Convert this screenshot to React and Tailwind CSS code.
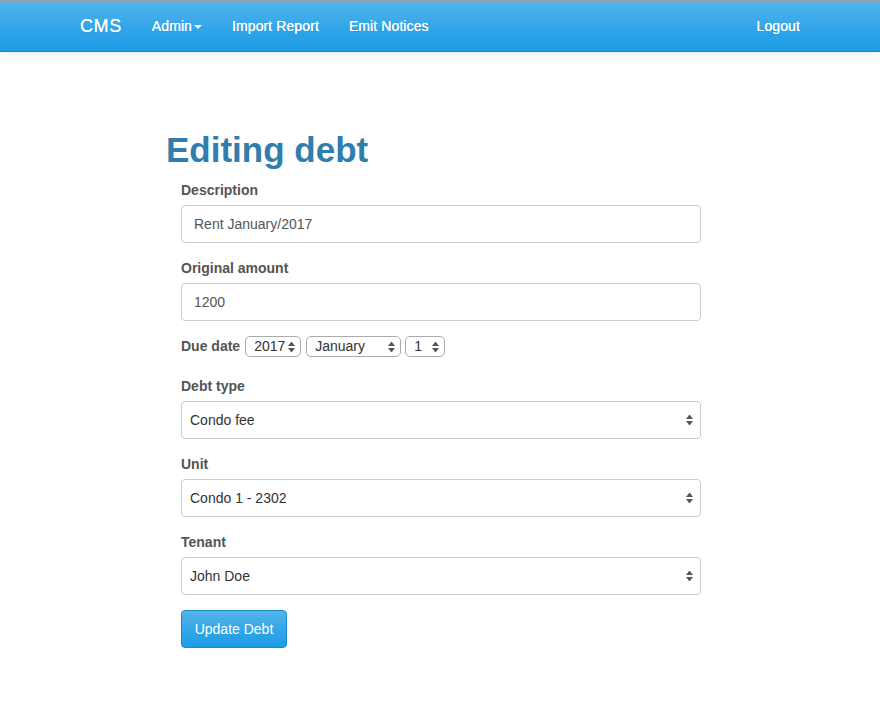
import { useState } from "react";

const navGradient =
  "bg-[linear-gradient(#54b4eb,#2fa4e7_60%,#1d9ce5)]";

function Arrows({ className = "" }) {
  return (
    <svg
      width="7"
      height="11"
      viewBox="0 0 7 11"
      className={"pointer-events-none absolute top-1/2 -translate-y-1/2 " + className}
    >
      <polygon points="0,4.5 3.5,0 7,4.5" fill="#555" />
      <polygon points="0,6.5 3.5,11 7,6.5" fill="#555" />
    </svg>
  );
}

function Field({ label, children }) {
  return (
    <div className="mb-[15px]">
      <label className="mb-[5px] block h-[20px] font-bold leading-[20px] text-[#555]">
        {label}
      </label>
      {children}
    </div>
  );
}

function TextInput({ value }) {
  const [v, setV] = useState(value);
  return (
    <input
      value={v}
      onChange={(e) => setV(e.target.value)}
      className="block h-[38px] w-full rounded-[4px] border border-[#ccc] bg-white px-[12px] text-[14px] text-[#555] outline-none"
    />
  );
}

function BigSelect({ value }) {
  return (
    <div className="relative">
      <select
        defaultValue={value}
        className="block h-[38px] w-full appearance-none rounded-[4px] border border-[#ccc] bg-white pl-[8px] pr-[24px] text-[14px] text-[#333] outline-none"
      >
        <option>{value}</option>
      </select>
      <Arrows className="right-[8px]" />
    </div>
  );
}

function SmallSelect({ value, width }) {
  return (
    <div className={"relative " + width}>
      <select
        defaultValue={value}
        className="block h-[21px] w-full appearance-none rounded-[5px] border border-[#aaa] bg-white pl-[8px] text-[14px] leading-[19px] text-[#333] outline-none"
      >
        <option>{value}</option>
      </select>
      <Arrows className="right-[6px]" />
    </div>
  );
}

export default function App() {
  return (
    <div className="min-h-screen bg-white font-['Liberation_Sans',Arial,sans-serif] text-[14px] text-[#555]">
      {/* Navbar */}
      <div className="border-t border-[#a8a8a8]">
        <nav
          className={
            "h-[51px] border-b border-[#178acc] shadow-[0_1px_10px_rgba(0,0,0,0.1)] " +
            navGradient
          }
        >
          <div className="mx-auto flex h-full w-[750px] items-center px-[15px] text-white tracking-[0.1px] [text-shadow:0_0_0.4px_#fff,0_1px_0_rgba(0,0,0,0.05)]">
            <span className="pr-[15px] text-[18px] leading-[20px] tracking-[0.6px]">CMS</span>
            <span className="flex items-center px-[15px] leading-[20px]">
              Admin
              <svg width="8" height="4" viewBox="0 0 8 4" className="ml-[2px] mt-[1px]">
                <polygon points="0,0 8,0 4,4" fill="#fff" />
              </svg>
            </span>
            <span className="px-[15px] leading-[20px]">Import Report</span>
            <span className="px-[15px] leading-[20px]">Emit Notices</span>
            <span className="ml-auto leading-[20px]">Logout</span>
          </div>
        </nav>
      </div>

      {/* Content */}
      <div className="mx-auto w-[750px] px-[15px] pt-[78px]">
        <div className="pl-[86px]">
          <h1 className="mb-[10px] text-[35px] font-bold leading-[40px] text-[#317eac]">
            Editing debt
          </h1>

          <form className="w-[535px] pl-[15px]" onSubmit={(e) => e.preventDefault()}>
            <Field label="Description">
              <TextInput value="Rent January/2017" />
            </Field>

            <Field label="Original amount">
              <TextInput value="1200" />
            </Field>

            <div className="mb-[15px] flex h-[25px] items-start">
              <label className="mr-[5px] h-[20px] font-bold leading-[20px] text-[#555]">Due date</label>
              <SmallSelect value="2017" width="w-[56px]" />
              <div className="w-[5px]" />
              <SmallSelect value="January" width="w-[95px]" />
              <div className="w-[4px]" />
              <SmallSelect value="1" width="w-[40px]" />
            </div>

            <Field label="Debt type">
              <BigSelect value="Condo fee" />
            </Field>

            <Field label="Unit">
              <BigSelect value="Condo 1 - 2302" />
            </Field>

            <Field label="Tenant">
              <BigSelect value="John Doe" />
            </Field>

            <button
              type="submit"
              className={
                "h-[38px] w-[106px] rounded-[4px] border border-[#178acc] text-[14px] text-white " +
                navGradient
              }
            >
              Update Debt
            </button>
          </form>
        </div>
      </div>
    </div>
  );
}
